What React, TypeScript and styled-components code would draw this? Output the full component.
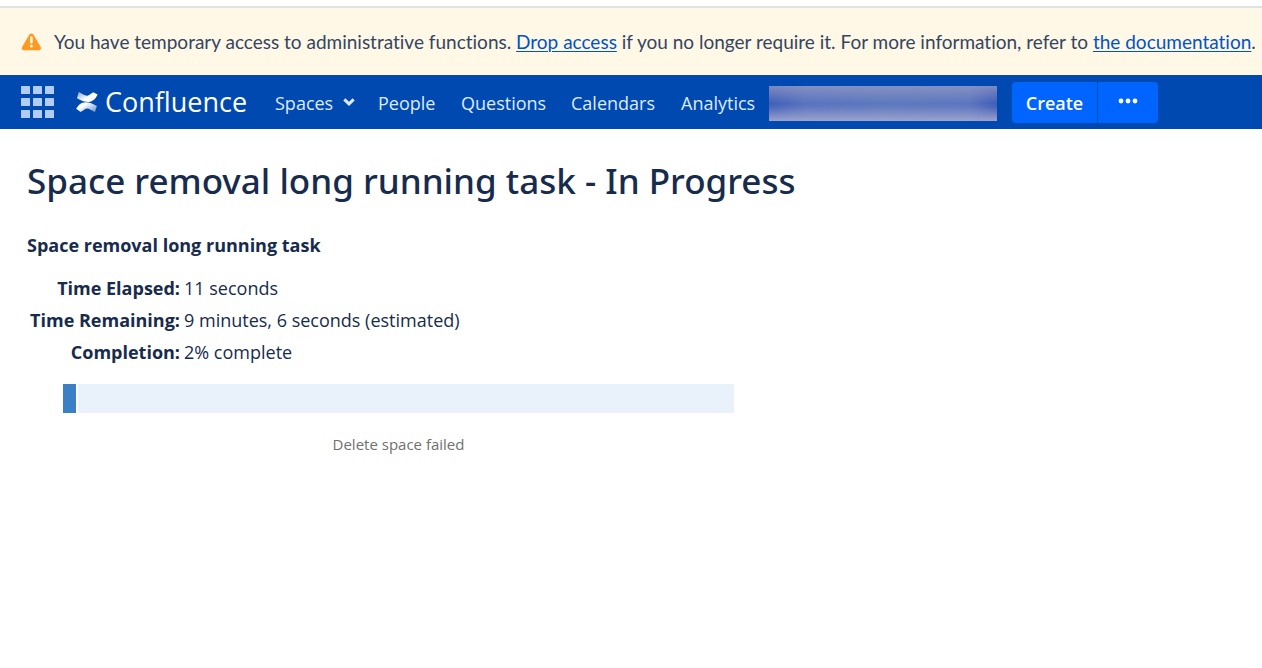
import React from "react";
import styled, { createGlobalStyle } from "styled-components";

const GlobalStyle = createGlobalStyle`
  * { box-sizing: border-box; }
  body {
    margin: 0;
    background: #ffffff;
    color: #172b4d;
    font: 18px/32px "Open Sans", "Noto Sans", sans-serif;
    overflow-x: hidden;
  }
  h1, h2, p, ul { margin: 0; padding: 0; }
  button { font: inherit; cursor: pointer; }
`;

const Banner = styled.div`
  display: flex;
  align-items: center;
  gap: 12px;
  margin-top: 6px;
  height: 69px;
  padding-left: 21px;
  border-top: 2px solid #dfe3de;
  background: #fff8e6;
  color: #344563;
  font-family: Lato, "Open Sans", sans-serif;
  font-size: 19px;
  font-variant-ligatures: none;
  white-space: nowrap;

  svg { flex: none; }
`;

const BannerLink = styled.a`
  color: #0052cc;
  text-decoration: underline;
  text-decoration-thickness: 1px;
  text-underline-offset: 2px;
`;

const Header = styled.header`
  display: flex;
  align-items: center;
  height: 54px;
  padding-left: 21px;
  background: #0049b0;
  color: #deebff;
`;

const AppSwitcher = styled.button`
  display: flex;
  flex: none;
  padding: 0;
  border: 0;
  background: none;
`;

const Logo = styled.a`
  display: flex;
  flex: none;
  align-items: center;
  gap: 7px;
  width: 172px;
  margin: 0 27px 0 22px;
  color: #ffffff;
  font-size: 27px;
  text-decoration: none;
`;

const NavList = styled.ul`
  display: flex;
  gap: 26px;
  list-style: none;
`;

const NavLink = styled.a<{ $width: number }>`
  display: flex;
  align-items: center;
  gap: 10px;
  width: ${(p) => p.$width}px;
  padding-top: 2px;
  color: inherit;
  text-decoration: none;
  white-space: nowrap;

  svg { flex: none; }
`;

const Redacted = styled.div`
  width: 228px;
  height: 35px;
  margin: 2px 15px 0 14px;
  background:
    linear-gradient(180deg, rgba(146, 153, 196, 0.75), rgba(146, 153, 196, 0) 50%, rgba(160, 165, 206, 0.1) 60%, rgba(160, 165, 206, 0.95)),
    linear-gradient(90deg, #3f5fb8, #5873be 16%, #5c79be 50%, #5c76be 88%, #3f5cb8);
`;

const ButtonGroup = styled.div`
  display: flex;
  gap: 1px;
`;

const HeaderButton = styled.button<{ $end?: boolean }>`
  display: flex;
  align-items: center;
  justify-content: center;
  width: ${(p) => (p.$end ? 60 : 85)}px;
  height: 41px;
  padding: 2px 0 0;
  border: 0;
  border-radius: ${(p) => (p.$end ? "0 4px 4px 0" : "4px 0 0 4px")};
  background: #0065ff;
  color: #ffffff;
  font-weight: 600;
`;

const Main = styled.main`
  padding: 28px 27px;
`;

const Title = styled.h1`
  font-family: "Noto Sans", "Open Sans", sans-serif;
  font-size: 35px;
  line-height: 48px;
  font-weight: 500;
`;

const TaskName = styled.h2`
  margin-top: 24px;
  font-size: 18px;
  line-height: 32px;
  font-weight: 700;
`;

const Details = styled.table`
  margin-top: 11px;
  border-collapse: collapse;

  th, td { padding: 0; }
  th { width: 153px; text-align: right; font-weight: 700; white-space: nowrap; }
  td { padding-left: 4px; }
`;

const Progress = styled.section`
  max-width: 671px;
  margin: 16px 36px 0;
`;

const Track = styled.div`
  display: flex;
  gap: 2px;
  height: 29px;
`;

const Done = styled.div`
  background: #3b7fc4;
`;

const Remaining = styled.div`
  flex: 1;
  background: #e9f1fa;
`;

const Status = styled.p`
  margin-top: 15px;
  color: #707070;
  font-size: 15px;
  text-align: center;
`;

const nav = [
  { label: "Spaces", width: 77, menu: true },
  { label: "People", width: 57 },
  { label: "Questions", width: 84 },
  { label: "Calendars", width: 84 },
  { label: "Analytics", width: 74 },
];

const details = [
  ["Time Elapsed:", "11 seconds"],
  ["Time Remaining:", "9 minutes, 6 seconds (estimated)"],
  ["Completion:", "2% complete"],
];

const percent = 2;

const WarningIcon = () => (
  <svg width="21" height="18" viewBox="0 0 21 18" aria-hidden="true">
    <path d="M8.2 1.8C9.2.2 11.6.2 12.6 1.8L19.7 14c.9 1.6-.1 3.2-1.8 3.2H2.9c-1.7 0-2.7-1.6-1.8-3.2z" fill="#ff991f" />
    <path d="M10.4 4.5v4.8" stroke="#fff8e6" strokeWidth="2.6" strokeLinecap="round" />
    <circle cx="10.4" cy="13" r="1.5" fill="#fff8e6" />
  </svg>
);

const GridIcon = () => (
  <svg width="33" height="32" viewBox="0 0 33 32" fill="#b3ccf2" aria-hidden="true">
    {[0, 12, 24].map((y) =>
      [0, 12, 24].map((x) => <rect key={`${x}-${y}`} x={x} y={y} width="9" height="8" rx="0.5" />)
    )}
  </svg>
);

const ConfluenceMark = () => (
  <svg width="22" height="20" viewBox="0 0 22 20" aria-hidden="true">
    <defs>
      <linearGradient id="upper" x1="0" y1="0" x2="1" y2="0.8">
        <stop offset="0" stopColor="#fff" stopOpacity="0.5" />
        <stop offset="0.6" stopColor="#fff" />
      </linearGradient>
      <linearGradient id="lower" x1="0" y1="0" x2="1" y2="0.7">
        <stop offset="0.4" stopColor="#fff" />
        <stop offset="1" stopColor="#fff" stopOpacity="0.5" />
      </linearGradient>
    </defs>
    <path d="M2.8 0 C6.800 2 9.500 4.400 12 3.400 C14.200 2.600 15.600.800 17.200.200 L21.600 2.600 C19.500 6.800 17 9.900 12.600 9.900 C8.400 9.900 5 8.300.900 6.200 Z" fill="url(#upper)" />
    <path d="M.200 16.800 C2.400 13.200 5 10.300 9.400 10.300 C13.600 10.300 16.800 11.900 20.900 14 L18.900 20 C14.900 18.200 12.400 15.800 9.900 16.800 C7.800 17.500 6.400 19.400 4.600 20 Z" fill="url(#lower)" />
  </svg>
);

const Chevron = () => (
  <svg width="12" height="12" viewBox="0 0 12 12" aria-hidden="true">
    <path d="M1.3 2.300 6 6.800 10.700 2.300" fill="none" stroke="currentColor" strokeWidth="3" />
  </svg>
);

const Dots = () => (
  <svg width="20" height="10" viewBox="0 0 20 10" fill="currentColor" aria-hidden="true">
    <circle cx="3" cy="3" r="2.4" />
    <circle cx="10" cy="3" r="2.4" />
    <circle cx="17" cy="3" r="2.4" />
  </svg>
);

export default function App() {
  return (
    <>
      <GlobalStyle />
      <Banner role="status">
        <WarningIcon />
        <p>
          You have temporary access to administrative functions. <BannerLink href="#drop">Drop access</BannerLink> if you
          no longer require it. For more information, refer to <BannerLink href="#docs">the documentation</BannerLink>.
        </p>
      </Banner>
      <Header>
        <AppSwitcher aria-label="Linked applications">
          <GridIcon />
        </AppSwitcher>
        <Logo href="#home">
          <ConfluenceMark />
          Confluence
        </Logo>
        <nav>
          <NavList>
            {nav.map((item) => (
              <li key={item.label}>
                <NavLink href={`#${item.label.toLowerCase()}`} $width={item.width}>
                  {item.label}
                  {item.menu && <Chevron />}
                </NavLink>
              </li>
            ))}
          </NavList>
        </nav>
        <Redacted />
        <ButtonGroup>
          <HeaderButton>Create</HeaderButton>
          <HeaderButton $end aria-label="Create from template">
            <Dots />
          </HeaderButton>
        </ButtonGroup>
      </Header>
      <Main>
        <Title>Space removal long running task - In Progress</Title>
        <TaskName>Space removal long running task</TaskName>
        <Details>
          <tbody>
            {details.map(([label, value]) => (
              <tr key={label}>
                <th scope="row">{label}</th>
                <td>{value}</td>
              </tr>
            ))}
          </tbody>
        </Details>
        <Progress>
          <Track role="progressbar" aria-label="Completion" aria-valuenow={percent} aria-valuemin={0} aria-valuemax={100}>
            <Done style={{ width: `${percent}%` }} />
            <Remaining />
          </Track>
          <Status>Delete space failed</Status>
        </Progress>
      </Main>
    </>
  );
}
